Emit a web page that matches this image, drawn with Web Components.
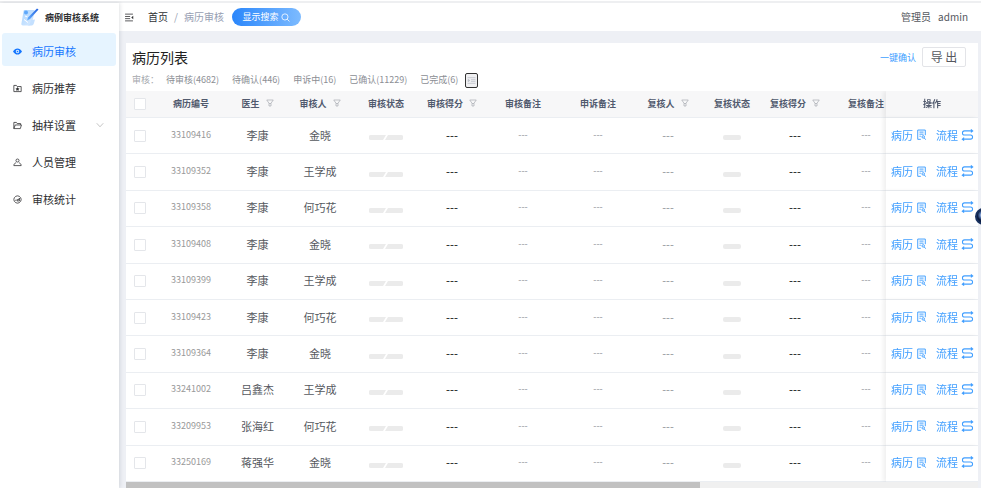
<!DOCTYPE html>
<html lang="zh-CN">
<head>
<meta charset="utf-8">
<title>病例审核系统</title>
<style>
    body {
        margin: 0;
        font-family: "Noto Sans CJK SC", sans-serif;
        color: #303133;
        --blue: #1677ff;
        --line: #ebeef2;
        --page: #eef0f5;
    }
</style>
</head>
<body>
<audit-app>
    <side-menu slot="side" heading="病例审核系统">
        <menu-item icon="eye" active>病历审核</menu-item>
        <menu-item icon="folder-star">病历推荐</menu-item>
        <menu-item icon="folder-open" expandable>抽样设置</menu-item>
        <menu-item icon="user">人员管理</menu-item>
        <menu-item icon="chart">审核统计</menu-item>
    </side-menu>
    <top-bar slot="top" home="首页" current="病历审核">
        <span slot="user">管理员</span>
        <span slot="user">admin</span>
    </top-bar>
    <record-card heading="病历列表">
        <status-filter slot="filter"></status-filter>
        <record-table></record-table>
    </record-card>
</audit-app>

<script>
const ICONS = {
    'eye': '<path fill="currentColor" fill-rule="evenodd" d="M0 8C2 4.500 5 2.500 8 2.500s6 2 8 5.500c-2 3.500-5 5.500-8 5.500S2 11.500 0 8zm8-3a3 3 0 1 0 0 6 3 3 0 0 0 0-6z"/><circle cx="8" cy="8" r="1.500" fill="currentColor"/>',
    'folder-star': '<path d="M1.500 2.500h4.500l1.500 2h7v9h-13z"/><path fill="currentColor" stroke="none" d="M8 5.500l1.200 2 2.300.4-1.600 1.700.3 2.400L8 11l-2.200 1 .3-2.400-1.600-1.700 2.300-.4z"/>',
    'folder-open': '<path d="M1.500 13.500v-11h4.500l1.500 2h6v2.500M1.500 13.500l2.500-6.500h11l-2 6.500z"/>',
    'user': '<circle cx="8" cy="4.500" r="2.700"/><path d="M5.500 8.500C3 9 1.500 11 1.500 13.500h13c0-2.500-1.500-4.500-4-5"/>',
    'chart': '<path d="M8 1.500l3 .8 2.800 2.700.7 3-.7 3-2.800 2.700-3 .8-3-.8L2.200 11l-.7-3 .7-3L5 2.300z"/><path d="M4.500 10V8.500M7 10.500V8l2 1 2.500-3.500v5z"/>',
    'down': '<path d="M1.500 4.500L8 11.500l6.500-7"/>',
    'fold': '<path d="M1 2h14M1 6.200h9M1 10h9M1 14h14"/><path fill="currentColor" stroke="none" d="M15.500 5v6L12 8z"/>',
    'search': '<circle cx="7" cy="7" r="5.500"/><path d="M11 11l4 4"/>',
    'filter': '<path d="M1.500 2h13L10 8.500v5.500H6V8.500zM6 9h4"/>',
    'list': '<path d="M1 3h14M7 6.500h8M7 9.500h8M1 13h14"/><path fill="currentColor" d="M2 6l3 2-3 2z"/>',
    'record': '<path d="M7 15H2.500V1.500h11V9M5 4.500h6M5 7.500h6M5 10.500h2"/><circle cx="10.500" cy="11.500" r="1.800"/><path d="M12 13l2 2.500"/>',
    'flow': '<path d="M14.500 2.500H4a2.700 2.700 0 0 0 0 5.500h8a2.700 2.700 0 0 1 0 5.500H1.500M12.500.5l2.500 2-2.500 2M3.500 11.500l-2.500 2 2.500 2"/>',
};

function makeTemplate(html) {
    const template = document.createElement('template');
    template.innerHTML = html;
    return template;
}

class BaseElement extends HTMLElement {
    constructor() {
        super();
        this.attachShadow({mode: 'open'});
        this.shadowRoot.appendChild(this.constructor.template.content.cloneNode(true));
    }

    $(selector) {
        return this.shadowRoot.querySelector(selector);
    }
}

class UiIcon extends BaseElement {
    static template = makeTemplate(`
        <style>
            :host { display: inline-block; width: 10px; height: 10px; flex: none; }
            svg { display: block; width: 100%; height: 100%; overflow: visible; }
        </style>
        <svg viewBox="0 0 16 16" fill="none" stroke="currentColor" stroke-width="1.400" aria-hidden="true"></svg>
    `);

    connectedCallback() {
        this.$('svg').innerHTML = ICONS[this.getAttribute('name')];
        if (this.getAttribute('name') === 'eye') {
            this.$('svg').setAttribute('stroke', 'none');
        }
    }
}

class AuditApp extends BaseElement {
    static template = makeTemplate(`
        <style>
            :host {
                display: flex;
                flex-direction: column;
                box-sizing: border-box;
                height: 100vh;
                min-height: 320px;
                border-top: 1px solid #fff;
                background: var(--page);
                overflow: hidden;
            }
            .rule { height: 2px; background: #eeeff1; }
            .frame {
                flex: 1;
                display: grid;
                grid-template-columns: 119px minmax(0, 1fr);
                grid-template-rows: minmax(0, 1fr);
                min-height: 0;
            }
            .main { display: flex; flex-direction: column; min-height: 0; }
            .content { flex: 1; min-height: 0; padding: 12px 3px 0 7px; }
            .helper {
                position: fixed;
                right: -11px;
                top: 208px;
                width: 17px;
                height: 17px;
                padding: 0;
                border: 2px solid #17305f;
                border-radius: 50%;
                background: radial-gradient(circle at 45% 40%, #e6efff 0 12%, #5d7fb8 28%, #0c1d44 50%);
            }
        </style>
        <div class="rule"></div>
        <div class="frame">
            <slot name="side"></slot>
            <div class="main">
                <slot name="top"></slot>
                <div class="content"><slot></slot></div>
            </div>
        </div>
        <button class="helper" type="button"></button>
    `);
}

class SideMenu extends BaseElement {
    static template = makeTemplate(`
        <style>
            :host {
                display: block;
                background: #fff;
                box-shadow: 1px 0 4px rgba(0, 21, 41, .12);
                z-index: 1;
            }
            .logo {
                display: flex;
                align-items: center;
                gap: 6px;
                height: 28px;
                padding-left: 21px;
                font-size: 9px;
                font-weight: 700;
                white-space: nowrap;
            }
            .logo svg { width: 18px; height: 18px; }
            nav { display: flex; flex-direction: column; gap: 4px; padding: 2px 3px 0 2px; }
        </style>
        <div class="logo">
            <svg viewBox="0 0 36 36" aria-hidden="true">
                <defs>
                    <linearGradient id="sheet" x1="0" y1="0" x2="1" y2="1">
                        <stop offset="0" stop-color="#a9d4ff"/><stop offset="1" stop-color="#dcecff"/>
                    </linearGradient>
                    <linearGradient id="pen" x1="1" y1="0" x2="0" y2="1">
                        <stop offset="0" stop-color="#1f5fe0"/><stop offset="1" stop-color="#6bb4ff"/>
                    </linearGradient>
                </defs>
                <path fill="url(#sheet)" d="M7 4h18c2 0 3 1 2 4l-5 22c-1 4-3 5-6 5H4c-3 0-4-2-3-5L5 7c0-2 1-3 2-3z"/>
                <path fill="#c4e0ff" d="M20 24l8-1-2 7c-1 4-3 5-6 5h-7c4-1 6-5 7-11z"/>
                <path stroke="#fff" stroke-width="2" d="M6 23l8 6M8 16l5 2"/>
                <circle cx="10" cy="9" r="4" fill="#5fa8fa"/>
                <path fill="url(#pen)" d="M32 1l3 2-17 19-6 3 2-6z"/>
            </svg>
            <span id="heading"></span>
        </div>
        <nav><slot></slot></nav>
    `);

    connectedCallback() {
        this.$('#heading').textContent = this.getAttribute('heading');
    }
}

class MenuItem extends BaseElement {
    static template = makeTemplate(`
        <style>
            :host { display: block; }
            a {
                display: flex;
                align-items: center;
                box-sizing: border-box;
                height: 33px;
                padding: 3px 12px 0 11px;
                border-radius: 3px;
                font-size: 11px;
                line-height: 18px;
                color: inherit;
                text-decoration: none;
                white-space: nowrap;
            }
            .label { flex: 1; margin-left: 10px; }
            #icon { width: 9px; height: 9px; }
            #arrow { width: 8px; height: 8px; color: #aaa; }
            :host(:not([expandable])) #arrow { display: none; }
            :host([active]) a { background: #e6f4ff; color: var(--blue); }
        </style>
        <a href="#">
            <ui-icon id="icon"></ui-icon>
            <span class="label"><slot></slot></span>
            <ui-icon id="arrow" name="down"></ui-icon>
        </a>
    `);

    connectedCallback() {
        const icon = this.$('#icon');
        icon.setAttribute('name', this.getAttribute('icon'));
        customElements.upgrade(icon);
        icon.connectedCallback();
    }
}

class TopBar extends BaseElement {
    static template = makeTemplate(`
        <style>
            :host {
                display: flex;
                align-items: center;
                height: 28px;
                padding: 0 13px 0 5px;
                background: #fff;
                font-size: 10px;
                line-height: 16px;
                white-space: nowrap;
            }
            .fold { display: flex; padding: 0; border: 0; background: none; color: #303133; }
            .fold ui-icon { width: 10px; height: 9px; }
            nav { display: flex; gap: 6px; margin: 0 8px 0 14px; color: #97a0b3; }
            nav a { color: #303133; text-decoration: none; }
            .search {
                display: flex;
                align-items: center;
                justify-content: center;
                gap: 3px;
                width: 69px;
                height: 18px;
                padding: 0;
                border: 0;
                border-radius: 9px;
                background: linear-gradient(90deg, #2a86fb, #7dbbff);
                color: #fff;
                font: inherit;
                font-size: 9px;
            }
            .search ui-icon { width: 9px; height: 9px; }
            .user { display: flex; gap: 7px; margin-left: auto; color: #55585e; }
        </style>
        <button class="fold" type="button" aria-label="menu"><ui-icon name="fold"></ui-icon></button>
        <nav><a id="home" href="#"></a><span>/</span><span id="current"></span></nav>
        <button class="search" type="button">显示搜索<ui-icon name="search"></ui-icon></button>
        <div class="user"><slot name="user"></slot></div>
    `);

    connectedCallback() {
        this.$('#home').textContent = this.getAttribute('home');
        this.$('#current').textContent = this.getAttribute('current');
    }
}

class RecordCard extends BaseElement {
    static template = makeTemplate(`
        <style>
            :host {
                display: flex;
                flex-direction: column;
                height: 100%;
                background: #fff;
            }
            header {
                display: flex;
                align-items: center;
                height: 28px;
                padding: 0 12px 0 6px;
            }
            h1 { flex: 1; margin: 0; font-size: 14px; font-weight: 400; line-height: 20px; color: #222; }
            button { font: inherit; padding: 0; }
            .confirm { border: 0; background: none; font-size: 9px; color: #409eff; }
            .export {
                width: 44px;
                height: 20px;
                margin-left: 6px;
                border: 1px solid #e3e4e8;
                border-radius: 2px;
                background: #fff;
                font-size: 12px;
                line-height: 18px;
                color: #55585e;
            }
            .body { flex: 1; min-height: 0; }
        </style>
        <header>
            <h1></h1>
            <button class="confirm" type="button">一键确认</button>
            <button class="export" type="button">导 出</button>
        </header>
        <slot name="filter"></slot>
        <div class="body"><slot></slot></div>
    `);

    connectedCallback() {
        this.$('h1').textContent = this.getAttribute('heading');
    }
}

const STATUSES = ['待审核(4682)', '待确认(446)', '申诉中(16)', '已确认(11229)', '已完成(6)'];

class StatusFilter extends BaseElement {
    static template = makeTemplate(`
        <style>
            :host {
                display: flex;
                align-items: center;
                height: 18px;
                padding: 0 6px 2px;
                font-size: 9px;
                line-height: 14px;
                color: #a5a8ad;
                white-space: nowrap;
            }
            #links { display: flex; gap: 13px; margin: 0 7px; }
            a { color: #8b8e94; text-decoration: none; }
            button {
                display: flex;
                align-items: center;
                justify-content: center;
                width: 13px;
                height: 15px;
                padding: 0;
                border: 1px solid #333;
                border-radius: 2px;
                background: #f0f0f2;
                color: #bcbfc8;
            }
            button ui-icon { width: 9px; height: 9px; }
        </style>
        <span>审核：</span>
        <div id="links"></div>
        <button type="button" aria-label="list"><ui-icon name="list"></ui-icon></button>
    `);

    connectedCallback() {
        this.$('#links').innerHTML = STATUSES.map(s => `<a href="#">${s}</a>`).join('');
    }
}

const COLUMNS = [
    {title: '病历编号', width: 74, cls: 'code'},
    {title: '医生', width: 59, cls: 'name', filter: true},
    {title: '审核人', width: 66, cls: 'name', filter: true},
    {title: '审核状态', width: 66, cls: 'state'},
    {title: '审核得分', width: 66, cls: 'score', filter: true},
    {title: '审核备注', width: 76, cls: 'note'},
    {title: '申诉备注', width: 74, cls: 'note'},
    {title: '复核人', width: 66, cls: 'name dim', filter: true},
    {title: '复核状态', width: 62, cls: 'state'},
    {title: '复核得分', width: 64, cls: 'score', filter: true},
    {title: '复核备注', width: 78, cls: 'note'},
];

const RECORDS = [
    ['33109416', '李康', '金晓'],
    ['33109352', '李康', '王学成'],
    ['33109358', '李康', '何巧花'],
    ['33109408', '李康', '金晓'],
    ['33109399', '李康', '王学成'],
    ['33109423', '李康', '何巧花'],
    ['33109364', '李康', '金晓'],
    ['33241002', '吕鑫杰', '王学成'],
    ['33209953', '张海红', '何巧花'],
    ['33250169', '蒋强华', '金晓'],
];

class RecordTable extends BaseElement {
    static template = makeTemplate(`
        <style>
            :host { display: flex; flex-direction: column; height: 100%; }
            .scroller { flex: 1; min-height: 0; overflow: hidden; }
            table {
                table-layout: fixed;
                width: 100%;
                min-width: 871px;
                height: 100%;
                border-collapse: separate;
                border-spacing: 0;
                text-align: center;
                white-space: nowrap;
            }
            th, td { padding: 0; border-bottom: 1px solid var(--line); background: #fff; line-height: 16px; }
            td { padding-bottom: 2px; }
            td.pick { padding-bottom: 0; }
            th { height: 26px; background: #f7f7f8; font-size: 9px; font-weight: 700; color: #515a6e; }
            th ui-icon { width: 8px; height: 8px; margin-left: 6px; color: #a8abb2; }
            .code { font-size: 9px; color: #999; }
            .name { font-size: 11px; color: #55585e; }
            .dim { color: #909399; }
            .score { font-size: 11px; font-weight: 500; color: #303133; }
            .note { font-size: 9px; color: #909399; }
            th.code, th.name, th.score, th.note { font-size: 9px; font-weight: 700; color: #515a6e; }
            input {
                appearance: none;
                display: block;
                width: 12px;
                height: 12px;
                margin: 0 auto;
                border: 1px solid #e4e6ea;
                border-radius: 1px;
                background: #fff;
            }
            .bars { display: flex; justify-content: center; padding-top: 6px; }
            .bars svg { display: block; height: 5px; }
            .ops {
                position: sticky;
                right: 0;
                box-shadow: -3px 0 4px rgba(0, 0, 0, .06);
            }
            .links { display: flex; gap: 9px; padding-left: 5px; font-size: 11px; }
            a { display: flex; align-items: center; gap: 3px; color: #409eff; text-decoration: none; }
            a ui-icon { width: 11px; height: 11px; }
            a + a ui-icon { width: 13px; height: 12px; }
            .track { height: 6px; background: #f0f0f0; }
            .thumb { width: 67.4%; height: 6px; background: #c1c1c1; }
        </style>
        <div class="scroller">
            <table>
                <colgroup></colgroup>
                <thead></thead>
                <tbody></tbody>
            </table>
        </div>
        <div class="track"><div class="thumb"></div></div>
    `);

    connectedCallback() {
        this.$('colgroup').innerHTML = '<col style="width: 28px">'
            + COLUMNS.map(c => `<col style="width: ${c.width}px">`).join('')
            + '<col style="width: 92px">';
        this.$('thead').innerHTML = `<tr>
            <th><input type="checkbox" aria-label="全选"></th>
            ${COLUMNS.map(c => this.renderHead(c)).join('')}
            <th class="ops">操作</th>
        </tr>`;
        this.$('tbody').innerHTML = RECORDS.map(r => this.renderRow(r)).join('');
    }

    renderHead(column) {
        const icon = column.filter ? '<ui-icon name="filter"></ui-icon>' : '';
        return `<th class="${column.cls}">${column.title}${icon}</th>`;
    }

    renderRow(record) {
        const cells = COLUMNS.map((column, i) => {
            if (column.cls === 'state') {
                return `<td>${this.renderState(column.title === '审核状态')}</td>`;
            }
            return `<td class="${column.cls}">${record[i] || '---'}</td>`;
        });
        return `<tr>
            <td class="pick"><input type="checkbox" aria-label="${record[0]}"></td>
            ${cells.join('')}
            <td class="ops"><div class="links">
                <a href="#">病历<ui-icon name="record"></ui-icon></a>
                <a href="#">流程<ui-icon name="flow"></ui-icon></a>
            </div></td>
        </tr>`;
    }

    // progress bar, split by a slanted gap when it has two steps
    renderState(split) {
        if (split) {
            return `<div class="bars"><svg width="34" viewBox="0 0 34 5" fill="#ebebeb">
                <path d="M2 0h15l-3 5H2a2 2 0 0 1 0-5zM19 0h13a2 2 0 0 1 0 5H16z"/>
            </svg></div>`;
        }
        return `<div class="bars"><svg width="18" viewBox="0 0 18 5" fill="#ebebeb">
            <rect width="18" height="5" rx="2"/>
        </svg></div>`;
    }
}

customElements.define('ui-icon', UiIcon);
customElements.define('menu-item', MenuItem);
customElements.define('side-menu', SideMenu);
customElements.define('top-bar', TopBar);
customElements.define('status-filter', StatusFilter);
customElements.define('record-table', RecordTable);
customElements.define('record-card', RecordCard);
customElements.define('audit-app', AuditApp);
</script>
</body>
</html>
